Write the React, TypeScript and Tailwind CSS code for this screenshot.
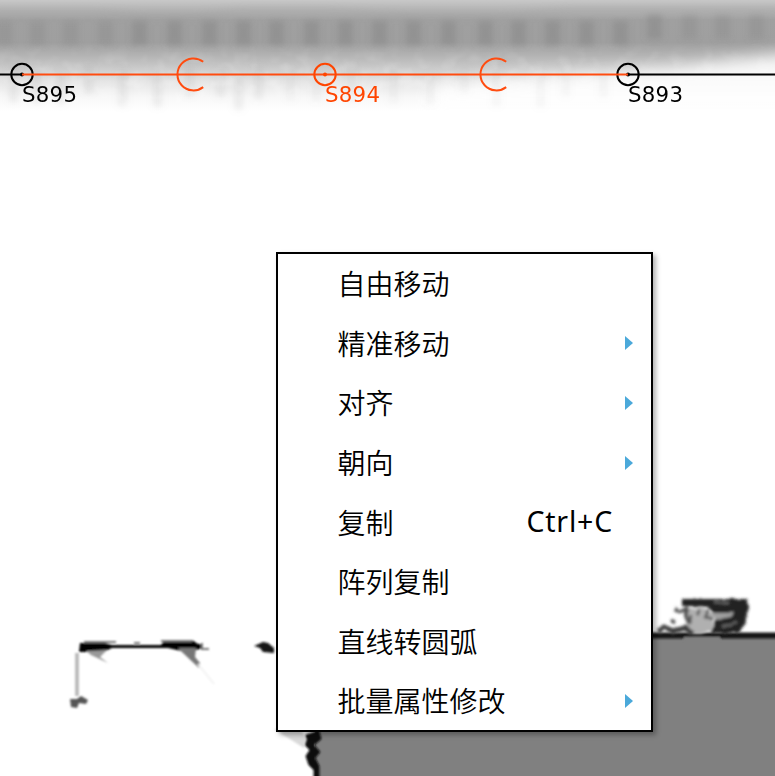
const items = [
  { label: '自由移动' },
  { label: '精准移动', sub: true },
  { label: '对齐', sub: true },
  { label: '朝向', sub: true },
  { label: '复制', key: 'Ctrl+C' },
  { label: '阵列复制' },
  { label: '直线转圆弧' },
  { label: '批量属性修改', sub: true },
];

const spots = [5, 38, 71, 106, 140, 175, 210, 244, 277, 312, 346, 380, 414, 449, 486, 519, 553, 587, 621, 655, 690, 723, 757];
const streaks = [14, 37, 61, 89, 123, 158, 190, 221, 239, 259, 291, 317, 352, 394, 431, 465, 497, 541, 566, 604];

function ScanMap() {
  return (
    <svg className="absolute inset-0" width="775" height="776" viewBox="0 0 775 776">
      <defs>
        <linearGradient id="band" x1="0" y1="0" x2="0" y2="112" gradientUnits="userSpaceOnUse">
          <stop offset="0" stopColor="#c8c8c8" />
          <stop offset=".07" stopColor="#b8b8b8" />
          <stop offset=".18" stopColor="#a0a0a0" />
          <stop offset=".38" stopColor="#9f9f9f" />
          <stop offset=".49" stopColor="#b2b2b2" />
          <stop offset=".62" stopColor="#cdcdcd" />
          <stop offset=".73" stopColor="#e6e6e6" />
          <stop offset=".87" stopColor="#f8f8f8" />
          <stop offset="1" stopColor="#fff" />
        </linearGradient>
        <linearGradient id="fade" x1="0" x2="0" y1="0" y2="1"><stop offset="0" stopColor="#000" /><stop offset=".5" stopColor="#fff" /></linearGradient>
        <mask id="fadeIn"><rect y="42" width="775" height="70" fill="url(#fade)" /></mask>
        <filter id="b1" x="-20%" y="-50%" width="140%" height="200%"><feGaussianBlur stdDeviation="1.3" /></filter>
        <filter id="b3" x="-5%" y="-50%" width="110%" height="200%"><feGaussianBlur stdDeviation="3.2" /></filter>
        <filter id="b8" x="-10%" y="-50%" width="120%" height="200%"><feGaussianBlur stdDeviation="8" /></filter>
        <filter id="edge" filterUnits="userSpaceOnUse" x="640" y="585" width="140" height="70"><feGaussianBlur stdDeviation=".9" /></filter>
        <filter id="grain" x="0" y="0" width="100%" height="100%">
          <feTurbulence type="fractalNoise" baseFrequency=".07 .08" numOctaves="2" seed="8" />
          <feColorMatrix values="0 0 0 0 1  0 0 0 0 1  0 0 0 0 1  3 0 0 0 -1.3" />
        </filter>
        <filter id="rough" x="-20%" y="-30%" width="140%" height="160%">
          <feTurbulence type="fractalNoise" baseFrequency=".14" numOctaves="2" seed="4" />
          <feDisplacementMap in="SourceGraphic" scale="3" xChannelSelector="R" yChannelSelector="G" />
          <feGaussianBlur stdDeviation="1.4" />
        </filter>
      </defs>
      <rect width="775" height="112" fill="url(#band)" />
      <path d="M430 112V88L560 76L680 68L800 52V112Z" fill="#fff" opacity=".85" filter="url(#b8)" />
      <g filter="url(#b3)">
        {spots.map((x, i) => <rect key={x} x={x - 8} y={i > 18 ? 15 : 21} width="15" height="24" fill="#868686" opacity={i < 4 || i > 19 ? 0.3 : 0.5} />)}
        {streaks.map((x, i) => <rect key={x} x={x - 5} y={66 + (i % 3) * 4} width="9" height={36 - (i % 4) * 3} fill="#999" opacity={i < 10 ? 0.16 : 0.09} />)}
        <path d="M-5 12H95L145 16H195L245 11H330L410 16H500L570 10H780" fill="none" stroke="#a1a1a1" strokeWidth="5" opacity=".35" />
      </g>
      <g mask="url(#fadeIn)"><rect y="42" width="775" height="70" filter="url(#grain)" opacity=".2" /></g>

      <rect x="315" y="636" width="460" height="140" fill="#808080" />
      <g filter="url(#edge)">
        <path d="M640 635.5H780" stroke="#151515" strokeWidth="6" />
        <path d="M684 639H720" stroke="#808080" strokeWidth="4" />
      </g>
      <g filter="url(#b1)">
        <path d="M318 728L315 732L306 735L304 744L310 750L306 756L309 765L314 770V778H319V766L315 758L320 752L314 745L321 739Z" fill="#111" stroke="#111" />
      </g>
      <g filter="url(#rough)">
        <path d="M682 599H747L749 607L745 624L738 633H711L716 616L708 607L682 606Z" fill="#202020" />
        <path d="M688 608H704L714 614L712 630L701 634H690L685 619Z" fill="#b0b0b0" />
        <path d="M711 613L734 613L731 617L715 620Z" fill="#a0a0a0" />
        <path d="M714 603H728M722 627L737 622" stroke="#666" strokeWidth="2.5" />
        <path d="M700 609L697 616M709 610L705 617L713 619M691 615L690 623" stroke="#555" strokeWidth="2.5" fill="none" />
        <path d="M675 609L681 612L686 609L686 616L690 624" fill="none" stroke="#555" strokeWidth="4" />
        <path d="M658 631L664 627L673 631L685 628L693 634" fill="none" stroke="#404040" strokeWidth="5" />
        <path d="M671 620L675 622" stroke="#444" strokeWidth="3" />
      </g>

      <g filter="url(#b1)">
        <path d="M80 643L105 643L112 645H161L164 641L192 640L198 644H203V648L193 651H181L168 648H112L103 652L79 652Z" fill="#000" />
        <path d="M84 642L116 642M134 643H140M161 641L192 641M202 643V649H209" fill="none" stroke="#777" strokeWidth="2" />
        <path d="M86 651L107 650L100 657L108 663L91 655Z" fill="#999" />
        <path d="M178 648H196L195 657L200 663L199 668L183 653Z" fill="#777" />
        <path d="M198 664L214 684" stroke="#f2f2f2" strokeWidth="2" />
        <path d="M77 653V696" stroke="#b4b4b4" strokeWidth="3.5" />
        <path d="M70 699H77L81 696L88 700L86 704L79 703L77 708L71 707Z" fill="#555" />
        <path d="M254 646L263 642L268 643L274 648V653L263 652L260 648Z" fill="#151515" />
        <path d="M274 729L304 748L307 739L300 729Z" fill="#d9d9d9" />
      </g>
    </svg>
  );
}

function Route() {
  return (
    <svg className="absolute inset-0 font-['DejaVu_Sans',sans-serif]" width="775" height="120" viewBox="0 0 775 120" fill="none">
      <path d="M0 74.5H22M628 74.5H775" stroke="#000" strokeWidth="2.2" />
      <circle cx="22" cy="74.5" r="10.7" stroke="#000" strokeWidth="2" />
      <circle cx="628" cy="74.5" r="10.7" stroke="#000" strokeWidth="2" />
      <circle cx="22" cy="74.5" r="2" fill="#000" />
      <circle cx="628" cy="74.5" r="2" fill="#000" />
      <path d="M22 74.5H628" stroke="#ff4c10" strokeWidth="2.2" />
      <circle cx="325" cy="74.5" r="10.7" stroke="#ff4500" strokeWidth="2" />
      <circle cx="325" cy="74.5" r="2" fill="#ff4500" />
      <path d="M203.2 61.7A16 16 0 1 0 203.2 87.1M506.2 61.7A16 16 0 1 0 506.2 87.1" stroke="#ff4c10" strokeWidth="2" />
      <text x="22" y="102" fontSize="21.3" fill="#000" textLength="55">S895</text>
      <text x="325" y="102" fontSize="21.3" fill="#ff4500" textLength="55">S894</text>
      <text x="628" y="102" fontSize="21.3" fill="#000" textLength="55">S893</text>
    </svg>
  );
}

export default function App() {
  return (
    <main className="relative h-[776px] w-[775px] overflow-hidden bg-white">
      <ScanMap />
      <Route />
      <div className="absolute left-[276px] top-[252px] flex h-[480px] w-[377px] flex-col border-2 border-black bg-white font-['Noto_Sans_CJK_SC',sans-serif] text-[28px] font-[350] text-black shadow-[3px_3px_5px_rgba(0,0,0,0.3)]">
        {items.map((item) => (
          <div key={item.label} className="flex h-[59.6px] shrink-0 items-center justify-between pl-[59.5px] pr-[18px] leading-none">
            <span className="whitespace-nowrap pb-[1.2px]">{item.label}</span>
            {item.key && <span className="mr-5 pb-px font-['Noto_Sans',sans-serif] text-[28.5px] font-normal tracking-[0.8px]">{item.key}</span>}
            {item.sub && (
              <svg width="8" height="14" viewBox="0 0 8 14"><path d="M0 0L8 7L0 14Z" fill="#4ba9da" /></svg>
            )}
          </div>
        ))}
      </div>
    </main>
  );
}
